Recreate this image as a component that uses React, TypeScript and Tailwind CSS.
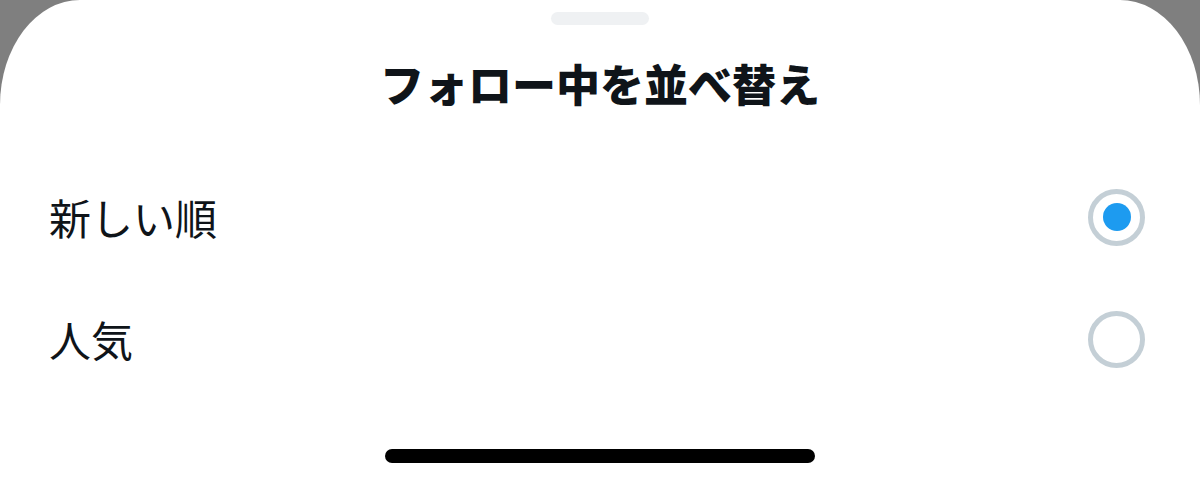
import React, { useState } from "react";

const options = ["新しい順", "人気"];

const Radio: React.FC<{ checked: boolean }> = ({ checked }) => (
  <span className="flex h-[57px] w-[57px] items-center justify-center rounded-full border-[5px] border-[#c4cfd6] bg-white">
    {checked && <span className="h-[28px] w-[28px] rounded-full bg-[#1d9bf0]" />}
  </span>
);

export default function App() {
  const [selected, setSelected] = useState(0);

  return (
    <div className="h-[486px] w-full overflow-hidden bg-[#7f7f7f]">
      <div
        className="flex h-full w-full flex-col items-center rounded-t-[80px_105px] bg-white text-[#0f1419]"
        style={{ fontFamily: '"Noto Sans CJK JP", "Noto Sans", sans-serif' }}
      >
        {/* drag handle */}
        <div className="mt-[12px] h-[13px] w-[98px] rounded-full bg-[#eff1f3]" />

        {/* title */}
        <h1 className="mt-[36px] text-[44px] font-extrabold leading-[44px]">フォロー中を並べ替え</h1>

        {/* options */}
        <div className="mt-[51px] flex w-full flex-col">
          {options.map((label, i) => (
            <button
              key={label}
              onClick={() => setSelected(i)}
              className="flex h-[122px] w-full items-center justify-between pl-[49px] pr-[55px] text-left"
            >
              <span className="text-[42px] leading-[42px]">{label}</span>
              <Radio checked={selected === i} />
            </button>
          ))}
        </div>

        {/* home indicator */}
        <div className="mt-[49px] h-[14px] w-[430px] rounded-full bg-black" />
      </div>
    </div>
  );
}
